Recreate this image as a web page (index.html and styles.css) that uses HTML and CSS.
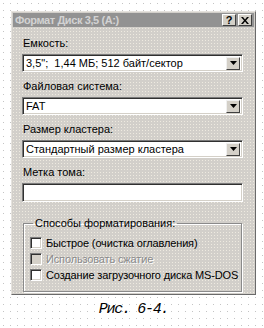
FILE: index.html
```html
<!DOCTYPE html>
<html lang="ru">
<head>
<meta charset="utf-8">
<title>Формат Диск 3,5 (A:)</title>
<link rel="stylesheet" href="styles.css">
</head>
<body>
<div class="page">
  <div class="dialog">
    <div class="titlebar">
      <span class="title">Формат Диск 3,5 (A:)</span>
      <div class="tbtns">
        <span class="tbtn help">?</span>
        <span class="tbtn close"><svg width="8" height="7" viewBox="0 0 8 7"><path d="M0 0h2l2 2.5L6 0h2L5 3.5 8 7H6L4 4.5 2 7H0l3-3.5z" fill="#000"/></svg></span>
      </div>
    </div>
    <div class="content">
      <div class="field">
        <div class="label">Емкость:</div>
        <div class="combo"><span class="val">3,5";&nbsp; 1,44 МБ; 512 байт/сектор</span><span class="drop"><svg width="7" height="4" viewBox="0 0 7 4"><path d="M0 0h7L3.5 4z" fill="#000"/></svg></span></div>
      </div>
      <div class="field">
        <div class="label">Файловая система:</div>
        <div class="combo"><span class="val">FAT</span><span class="drop"><svg width="7" height="4" viewBox="0 0 7 4"><path d="M0 0h7L3.5 4z" fill="#000"/></svg></span></div>
      </div>
      <div class="field">
        <div class="label">Размер кластера:</div>
        <div class="combo"><span class="val">Стандартный размер кластера</span><span class="drop"><svg width="7" height="4" viewBox="0 0 7 4"><path d="M0 0h7L3.5 4z" fill="#000"/></svg></span></div>
      </div>
      <div class="field">
        <div class="label">Метка тома:</div>
        <div class="textbox"></div>
      </div>
      <fieldset class="group">
        <legend>Способы форматирования:</legend>
        <div class="check"><span class="box"></span><span class="ctext">Быстрое (очистка оглавления)</span></div>
        <div class="check disabled"><span class="box"></span><span class="ctext">Использовать сжатие</span></div>
        <div class="check"><span class="box"></span><span class="ctext">Создание загрузочного диска MS-DOS</span></div>
      </fieldset>
    </div>
  </div>
  <div class="caption">Рис. 6-4.</div>
</div>
</body>
</html>
```

FILE: styles.css
```css
html, body {
  margin: 0;
  padding: 0;
}
body {
  background-color: #fff;
  background-image: radial-gradient(circle, #c4c4c4 0.6px, transparent 0.9px);
  background-size: 7px 7px;
  font-family: "Liberation Sans", Arial, sans-serif;
  font-size: 11px;
  color: #000;
  width: 264px;
  height: 328px;
  overflow: hidden;
}
.page {
  padding: 11px 0 0 11px;
}
.dialog {
  width: 243px;
  height: 282px;
  background-color: #d2cfca;
  background-image: radial-gradient(circle, #eeeae0 0.6px, transparent 0.9px);
  background-size: 3px 3px;
  border-top: 1px solid #e6e3de;
  border-left: 1px solid #e6e3de;
  border-right: 1px solid #6a6a6a;
  border-bottom: 1px solid #6a6a6a;
  display: flex;
  flex-direction: column;
}
.titlebar {
  margin: 1px 1px 0 1px;
  height: 14px;
  background-color: #858585;
  background-image: radial-gradient(circle, #9a9a9a 0.6px, transparent 0.9px);
  background-size: 2px 2px;
  display: flex;
  align-items: center;
  justify-content: space-between;
  padding: 0 2px 0 2px;
}
.title {
  color: #d2d2d2;
  font-weight: bold;
  font-size: 11px;
  letter-spacing: -0.4px;
}
.tbtns {
  display: flex;
  gap: 2px;
}
.tbtn {
  width: 14px;
  height: 12px;
  box-sizing: border-box;
  background: #d4d0c8;
  border-top: 1px solid #fff;
  border-left: 1px solid #fff;
  border-right: 1px solid #404040;
  border-bottom: 1px solid #404040;
  display: flex;
  align-items: center;
  justify-content: center;
  font-weight: bold;
  font-size: 11px;
  line-height: 10px;
}
.content {
  padding: 10px 12px 0 10px;
  display: flex;
  flex-direction: column;
}
.field {
  display: flex;
  flex-direction: column;
  margin-bottom: 8px;
}
.label {
  height: 13px;
  line-height: 13px;
  margin-bottom: 4px;
  padding-left: 1px;
}
.combo, .textbox {
  height: 18px;
  box-sizing: border-box;
  background: #fff;
  border-top: 1px solid #7a7a7a;
  border-left: 1px solid #7a7a7a;
  border-right: 1px solid #fff;
  border-bottom: 1px solid #fff;
  box-shadow: inset 1px 1px 0 #303030, inset -1px -1px 0 #d4d0c8;
  display: flex;
  align-items: center;
  justify-content: space-between;
  padding: 2px 2px 2px 3px;
}
.textbox {
  height: 19px;
}
.val {
  line-height: 13px;
}
.drop {
  width: 14px;
  height: 13px;
  box-sizing: border-box;
  background: #d4d0c8;
  border-top: 1px solid #f0f0f0;
  border-left: 1px solid #f0f0f0;
  border-right: 1px solid #404040;
  border-bottom: 1px solid #404040;
  display: flex;
  align-items: center;
  justify-content: center;
}
.group {
  margin: 7px 0 0 1px;
  padding: 5px 2px 8px 6px;
  border: 1px solid #8a8a8a;
  box-shadow: inset 1px 1px 0 #fff, 1px 1px 0 #fff;
  min-width: 0;
  width: 219px;
  box-sizing: border-box;
}
.group legend {
  padding: 0 2px;
  margin-left: 3px;
  line-height: 13px;
}
.check {
  display: flex;
  align-items: center;
  height: 16px;
  gap: 4px;
  white-space: nowrap;
}
.ctext {
  letter-spacing: -0.15px;
}
.box {
  width: 12px;
  height: 12px;
  flex: none;
  box-sizing: border-box;
  background: #fff;
  border-top: 1px solid #7a7a7a;
  border-left: 1px solid #7a7a7a;
  border-right: 1px solid #fff;
  border-bottom: 1px solid #fff;
  box-shadow: inset 1px 1px 0 #303030, inset -1px -1px 0 #d4d0c8;
}
.check.disabled .box {
  background: #d4d0c8;
}
.check.disabled .ctext {
  color: #8a8a8a;
  text-shadow: 1px 1px 0 #fff;
}
.caption {
  width: 245px;
  margin-top: 5px;
  text-align: center;
  font-family: "Liberation Mono", "Courier New", monospace;
  font-style: italic;
  font-size: 15px;
  letter-spacing: -1.3px;
  line-height: 20px;
}
```
